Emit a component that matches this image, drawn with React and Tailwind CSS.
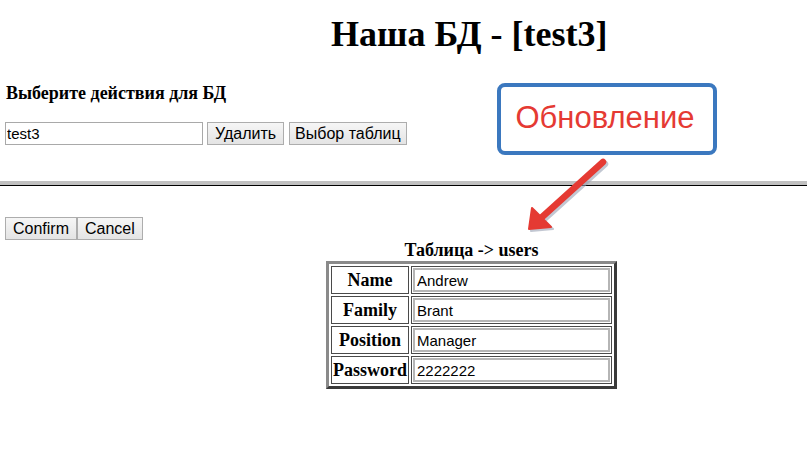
import React from "react";

const rows = [
  { label: "Name", value: "Andrew" },
  { label: "Family", value: "Brant" },
  { label: "Position", value: "Manager" },
  { label: "Password", value: "2222222" },
];

const btn =
  "h-[23px] border border-[#adadad] bg-gradient-to-b from-[#f6f6f6] to-[#e4e4e4] text-[16px] text-black leading-none font-['Liberation_Sans',Arial,sans-serif]";

const App = () => {
  return (
    <div className="relative w-[807px] h-[468px] overflow-hidden bg-white text-black font-['Liberation_Serif','Times_New_Roman',serif]">
      {/* Title */}
      <h1 className="pt-[12px] pl-[331px] text-[36px] leading-[44px] font-bold whitespace-nowrap">
        Наша БД - [test3]
      </h1>

      <div className="px-[5px]">
        <h3 className="mt-[26px] text-[18px] leading-[22px] font-bold pl-[1px]">
          Выберите действия для БД
        </h3>

        <div className="mt-[18px] flex items-center gap-[4px]">
          <input
            readOnly
            value="test3"
            className="w-[198px] h-[23px] px-[1px] border border-[#a9a9a9] text-[15px] font-['Liberation_Sans',Arial,sans-serif] outline-none"
          />
          <button className={`${btn} px-[7px]`}>Удалить</button>
          <button className={`${btn} ml-[1px] px-[5px]`}>Выбор таблиц</button>
        </div>
      </div>

      {/* Separator */}
      <div className="mt-[36px] h-[5px] border-t-[4px] border-[#c0c0c0] border-b border-b-black" />

      <div className="px-[5px] mt-[31px] flex">
        <button className={`${btn} px-[7px]`}>Confirm</button>
        <button className={`${btn} px-[7px]`}>Cancel</button>
      </div>

      {/* Table */}
      <div className="ml-[326px] w-[291px] mt-[1px]">
        <div className="text-center text-[18px] leading-[19px] font-bold">
          Таблица -&gt; users
        </div>
        <table className="mt-[1px] border-separate border-spacing-[2px] border-[3px] border-t-[#8a8a8a] border-l-[#8a8a8a] border-r-[#3a3a3a] border-b-[#3a3a3a]">
          <tbody>
            {rows.map((r) => (
              <tr key={r.label}>
                <th className="w-[78px] h-[28px] p-0 border border-[#4a4a4a] text-[18px] leading-[20px] font-bold text-center align-middle">
                  {r.label}
                </th>
                <td className="w-[201px] h-[28px] p-[1px] border border-[#4a4a4a]">
                  <input
                    readOnly
                    value={r.value}
                    className="block w-full h-[24px] px-[2px] border-2 border-[#b5b5b5] text-[15px] font-['Liberation_Sans',Arial,sans-serif] outline-none"
                  />
                </td>
              </tr>
            ))}
          </tbody>
        </table>
      </div>

      {/* Annotation callout */}
      <div className="absolute left-[497px] top-[83px] w-[220px] h-[72px] border-[4px] border-[#3b78bf] rounded-[8px] bg-white flex items-center justify-center">
        <span className="text-[31px] text-[#e53a33] font-['Liberation_Sans',Arial,sans-serif] leading-none pb-[3px] pr-[4px]">
          Обновление
        </span>
      </div>

      <svg
        className="absolute left-0 top-0 pointer-events-none"
        width="807"
        height="468"
        viewBox="0 0 807 468"
      >
        <g transform="translate(2,2)" fill="#9aa3b5" stroke="#9aa3b5" opacity="0.6">
          <line x1="603" y1="162" x2="541" y2="218" strokeWidth="6.5" strokeLinecap="round" />
          <polygon points="529,229 532,208 551,227" strokeWidth="2" strokeLinejoin="round" />
        </g>
        <g fill="#e53a33" stroke="#e53a33">
          <line x1="603" y1="162" x2="541" y2="218" strokeWidth="6.5" strokeLinecap="round" />
          <polygon points="529,229 532,208 551,227" strokeWidth="2" strokeLinejoin="round" />
        </g>
      </svg>
    </div>
  );
};

export default App;
